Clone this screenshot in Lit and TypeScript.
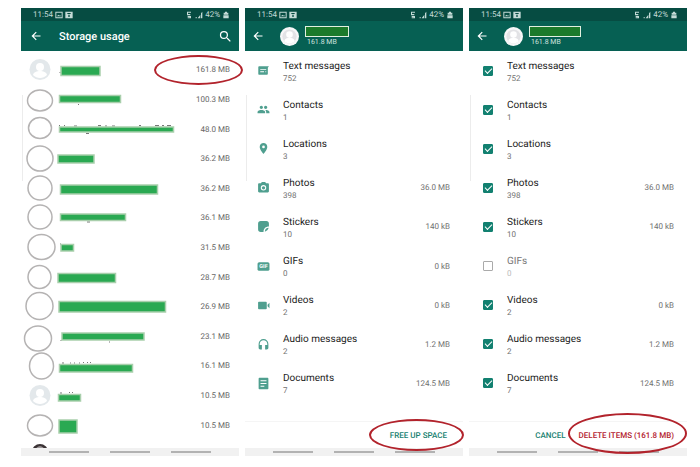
import { LitElement, html, css, svg, nothing } from "lit";
import { customElement, property } from "lit/decorators.js";

/* ---------- data ---------- */

interface Chat {
  size: string;
  // hand-drawn ring over the picture: cx, cy, rx, ry (row centre is y = 15)
  ring?: [number, number, number, number];
  // block over the name: x, y, width, height
  mask: [number, number, number, number];
  // bits of the name that stick out from under the block
  specks?: [number, number, number][];
}

const CHATS: Chat[] = [
  { size: "161.8 MB", mask: [40, 11.5, 39, 9], specks: [[38.5, 17, 1]] },
  { size: "100.3 MB", ring: [19, 15.5, 12.5, 10.5], mask: [38.5, 10.5, 61, 7], specks: [[57, 19, 1]] },
  { size: "48.0 MB", ring: [19, 13, 11.5, 10.5], mask: [38.5, 12, 114, 5], specks: [[38, 10, 1], [43, 10, 1], [53, 10.5, 3], [77, 10, 3], [84, 10.5, 2], [91, 10.5, 3], [118, 10, 2], [134, 10, 4], [141, 10, 2], [146, 10, 4], [65, 18, 3]] },
  { size: "36.2 MB", ring: [19, 14.5, 13, 12.5], mask: [37, 11, 36, 8] },
  { size: "36.2 MB", ring: [19, 14, 12, 12], mask: [39.5, 11, 97, 9] },
  { size: "36.1 MB", ring: [19, 14, 12, 12], mask: [39.5, 11, 65, 6.5], specks: [[66, 18.5, 3]] },
  { size: "31.5 MB", ring: [20.5, 14, 13.5, 12.5], mask: [40, 11.5, 12.5, 6.5], specks: [[39, 10.5, 1]] },
  { size: "28.7 MB", ring: [18.5, 14, 11.5, 11.5], mask: [37, 10.5, 57.5, 9] },
  { size: "26.9 MB", ring: [18.5, 14, 13.5, 13.5], mask: [38, 9.5, 106.5, 10.5] },
  { size: "23.1 MB", ring: [17, 16.5, 13.5, 12.5], mask: [41, 11, 82, 7], specks: [[39.5, 18, 1], [88, 19.5, 1]] },
  { size: "16.1 MB", ring: [20.5, 15, 12, 13], mask: [38.5, 13.5, 73, 7.5], specks: [[41, 11.5, 2], [49, 11.5, 1], [53, 11.5, 1], [58, 11.5, 1], [62, 11, 1], [66, 11, 1], [69, 11, 1]] },
  { size: "10.5 MB", mask: [37.5, 13.5, 22, 6.5], specks: [[39, 11.5, 2], [48, 11, 1], [51, 11, 1]] },
  { size: "10.5 MB", ring: [19, 14.5, 12.5, 10.5], mask: [38, 9, 18, 13] },
];

interface Kind {
  name: string;
  count: number;
  size?: string;
  icon: string;
}

const KINDS: Kind[] = [
  { name: "Text messages", count: 752, icon: "message" },
  { name: "Contacts", count: 1, icon: "people" },
  { name: "Locations", count: 3, icon: "place" },
  { name: "Photos", count: 398, size: "36.0 MB", icon: "camera" },
  { name: "Stickers", count: 10, size: "140 kB", icon: "sticker" },
  { name: "GIFs", count: 0, size: "0 kB", icon: "gif" },
  { name: "Videos", count: 2, size: "0 kB", icon: "video" },
  { name: "Audio messages", count: 2, size: "1.2 MB", icon: "audio" },
  { name: "Documents", count: 7, size: "124.5 MB", icon: "document" },
];

/* ---------- icons ---------- */

const ICONS: Record<string, unknown> = {
  message: svg`<path fill-rule="evenodd" d="M22 4H4c-1 0-1.600.6-1.600 1.600V18c0 1 .7 2 1.800 2H18c1 0 2-.9 2-2V7zM6 9h11v1.800H6zm0 4.200h7V15H6zm9.500 0H17V15h-1.500z"/>`,
  people: svg`<path d="M16 11c1.660 0 2.990-1.340 2.990-3S17.660 5 16 5s-3 1.340-3 3 1.340 3 3 3zm-8 0c1.660 0 2.990-1.340 2.990-3S9.660 5 8 5 5 6.340 5 8s1.340 3 3 3zm0 2c-2.330 0-7 1.170-7 3.500V19h14v-2.500c0-2.330-4.670-3.500-7-3.500zm8 0c-.29 0-.62.020-.97.050 1.160.84 1.970 1.970 1.970 3.450V19h6v-2.500c0-2.330-4.670-3.500-7-3.500z"/>`,
  place: svg`<path d="M12 2C8.130 2 5 5.130 5 9c0 5.250 7 13 7 13s7-7.750 7-13c0-3.870-3.130-7-7-7zm0 9.500a2.500 2.500 0 1 1 0-5 2.500 2.500 0 0 1 0 5z"/>`,
  camera: svg`<circle cx="12" cy="12.500" r="3"/><path fill-rule="evenodd" d="M9 2 7.170 4H4c-1.100 0-2 .9-2 2v13c0 1.100.9 2 2 2h16c1.100 0 2-.9 2-2V6c0-1.100-.9-2-2-2h-3.170L15 2zm3 15.500a5 5 0 1 1 0-10 5 5 0 0 1 0 10z"/>`,
  sticker: svg`<path d="M7 2h10a5 5 0 0 1 5 5v5c-6 0-10 4-10 10H7a5 5 0 0 1-5-5V7a5 5 0 0 1 5-5z"/><path d="M14.500 21.500c0-4 3-7 7-7-.5 3-4 6.500-7 7z"/>`,
  gif: svg`<rect x="1" y="4" width="22" height="16" rx="3"/><text x="12" y="15.600" text-anchor="middle" font-size="10" font-weight="700" fill="#fff">GIF</text>`,
  video: svg`<path d="M3.500 5h13c.8 0 1.500.6 1.500 1.500v11c0 .8-.7 1.500-1.500 1.500h-13C2.600 19 2 18.300 2 17.500v-11C2 5.600 2.600 5 3.500 5zM19.500 10.500 23 7v10l-3.500-3.500z"/>`,
  audio: svg`<path d="M12 2a9 9 0 0 0-9 9v7c0 1.660 1.340 3 3 3h3v-8H5v-2c0-3.870 3.130-7 7-7s7 3.130 7 7v2h-4v8h3c1.660 0 3-1.340 3-3v-7a9 9 0 0 0-9-9z"/>`,
  document: svg`<path fill-rule="evenodd" d="M4.500 1.500h15c1 0 1.500.6 1.500 1.500v18c0 1-.5 1.500-1.500 1.500h-15C3.500 22.500 3 22 3 21V3c0-.9.5-1.500 1.500-1.500zM6.500 6v2h11V6zm0 5v2h11v-2zm0 5v2h7v-2z"/>`,
  back: svg`<path d="M21 10.800H7.600l5.700-5.700L11.700 3.500 3 12l8.700 8.500 1.600-1.600-5.700-5.700H21z"/>`,
  search: svg`<path d="M15.500 14h-.79l-.28-.27A6.470 6.470 0 0 0 16 9.500 6.500 6.500 0 1 0 9.500 16c1.610 0 3.090-.59 4.230-1.570l.27.28v.79l5 4.990L20.490 19zm-6 0a4.500 4.500 0 1 1 0-9 4.500 4.500 0 0 1 0 9z"/>`,
  picture: svg`<path fill-rule="evenodd" d="M1 2h22v20H1zM4 5v14h16V5zM6 16l4-5 3 3 2-2 3 4z"/>`,
  note: svg`<path fill-rule="evenodd" d="M1 2h22v20H1zM7 6v3h10V6zm3 5v7h4v-7z"/>`,
  network: svg`<path d="M6 2h12v3H9v4h7v4H6zM8 15h10v7H8v-3h6v-1H8z"/>`,
  signal: svg`<path d="M2 22h3v-4H2zM8 22 16 11v11zM18 22h4V2l-4 5z"/>`,
  battery: svg`<path d="M9 2h6v3h4v6H5V5h4zM4 13h16v9H4z"/>`,
};

const icon = (name: string, cls = "") =>
  html`<svg class="icon ${cls}" viewBox="0 0 24 24" aria-hidden="true">${ICONS[name]}</svg>`;

const base = css`
  * {
    box-sizing: border-box;
  }
  .icon {
    display: block;
    flex: none;
    width: 13px;
    height: 13px;
    fill: currentColor;
  }
  button {
    margin: 0;
    padding: 0;
    border: 0;
    background: none;
    color: inherit;
    font: inherit;
    text-rendering: inherit;
    white-space: nowrap;
    cursor: pointer;
  }
`;

/* ---------- phone frame ---------- */

@customElement("phone-frame")
export class PhoneFrame extends LitElement {
  static styles = [
    base,
    css`
      :host {
        position: relative;
        display: flex;
        flex-direction: column;
        min-width: 0;
      }
      .status {
        display: flex;
        align-items: center;
        gap: 2px;
        height: 13px;
        padding: 1px 9px 0 12px;
        background: #064c42;
        color: #c3dad6;
        font-size: 8px;
        line-height: 12px;
      }
      .status .icon {
        width: 8px;
        height: 8px;
      }
      .status .gap {
        flex: 1;
      }
      .bar {
        display: flex;
        align-items: center;
        height: 30px;
        background: #066053;
        color: #fff;
      }
      .content {
        flex: 1;
        display: flex;
        flex-direction: column;
      }
      .nav {
        display: flex;
        justify-content: center;
        align-items: center;
        gap: 21px;
        height: 8px;
        background: #f1f1f1;
      }
      .nav i {
        width: 40px;
        height: 2px;
        background: #b2b2b2;
      }
      .handle {
        position: absolute;
        left: 1px;
        top: 87px;
        width: 1px;
        height: 86px;
        background: #ececec;
      }
    `,
  ];

  render() {
    return html`
      <div class="status">
        <span>11:54</span>${icon("picture")}${icon("note")}
        <span class="gap"></span>
        ${icon("network")}${icon("signal")}<span>42%</span>${icon("battery")}
      </div>
      <header class="bar"><slot name="bar"></slot></header>
      <div class="content"><slot></slot></div>
      <div class="nav"><i></i><i></i><i></i></div>
      <span class="handle"></span>
    `;
  }
}

/* ---------- app ---------- */

@customElement("app-root")
export class AppRoot extends LitElement {
  @property({ attribute: false }) chats = CHATS;
  @property({ attribute: false }) kinds = KINDS;

  static styles = [
    base,
    css`
      :host {
        display: block;
        background: #fff;
        color: #303030;
        font-family: Roboto, "Liberation Sans", sans-serif;
        font-size: 8px;
        line-height: 11px;
        text-rendering: geometricPrecision;
      }
      main {
        display: grid;
        grid-template-columns: repeat(3, minmax(0, 1fr));
        gap: 6px;
        padding: 8px 13px 11px 21px;
      }

      /* app bars */
      .top {
        flex: 1;
        display: flex;
        align-items: center;
        height: 30px;
        padding: 0 6px 0 9px;
      }
      .top h1 {
        flex: 1;
        margin: 0 0 0 17px;
        padding-top: 2px;
        font-size: 11px;
        line-height: 14px;
        font-weight: 500;
      }
      .top.contact {
        padding-left: 7px;
      }
      .top .icon {
        width: 12px;
        height: 12px;
      }
      .top .big {
        width: 15px;
        height: 15px;
      }
      .face {
        flex: none;
        width: 19px;
        height: 19px;
        margin: 0 6px 0 16px;
      }
      .who {
        display: flex;
        flex-direction: column;
        font-size: 7px;
        line-height: 10px;
        color: #cfe2df;
      }
      .who span {
        padding-left: 2px;
      }
      .cover {
        width: 44px;
        height: 11px;
        border: 1px solid #e2f0e0;
        background: #1b7a2b;
      }
      .cover.wide {
        width: 52px;
      }

      /* chats */
      .chats {
        display: grid;
        grid-template-columns: minmax(0, 1fr);
        grid-auto-rows: 1fr;
        min-height: 385px;
        margin: 4px 0 0;
        padding: 0;
        list-style: none;
      }
      .chat {
        position: relative;
        display: flex;
        align-items: center;
        padding-right: 9px;
        color: #666;
      }
      .sketch {
        flex: 1;
        width: 0;
        min-width: 0;
        height: 29px;
        overflow: visible;
      }
      .peek {
        height: 8px;
        overflow: hidden;
        padding: 4px 0 0 11px;
      }
      .peek svg {
        display: block;
        width: 16px;
        height: 16px;
      }

      /* kinds of item */
      .kinds {
        display: grid;
        grid-auto-rows: 1fr;
        min-height: 352px;
        margin: 0;
        padding: 0;
        list-style: none;
      }
      .kind {
        display: flex;
        align-items: center;
        gap: 13px;
        padding: 0 13px 0 12px;
        color: #707070;
      }
      .kind > .icon {
        color: #4f9f8f;
      }
      .kind label,
      .kind .label {
        flex: 1;
        padding-top: 3px;
      }
      .name {
        display: block;
        font-size: 10px;
        line-height: 12px;
        color: #222;
      }
      .count {
        display: block;
      }
      .off .name {
        color: #777;
      }
      .off .count {
        color: #bbb;
      }
      .tick {
        width: 13px;
        display: flex;
        justify-content: center;
      }
      input {
        appearance: none;
        position: relative;
        width: 10px;
        height: 10px;
        margin: 0;
        border: 1px solid #aaa;
        border-radius: 1px;
        background: #fff;
      }
      input:checked {
        border-color: #128070;
        background: #128070;
      }
      input:checked::after {
        content: "";
        position: absolute;
        left: 1px;
        top: 1px;
        width: 6px;
        height: 3px;
        border: solid #fff;
        border-width: 0 0 1px 1px;
        transform: rotate(-45deg);
      }

      /* actions */
      .actions {
        display: flex;
        justify-content: flex-end;
        align-items: center;
        gap: 13px;
        height: 27px;
        margin-top: auto;
        padding: 0 13px;
        border-top: 1px solid #f5f5f5;
        font-weight: 500;
        color: #16806f;
      }
      .actions.single {
        padding-right: 16px;
      }
      .danger {
        color: #b3202e;
      }
      .spot {
        position: relative;
      }

      /* red pen circles */
      .pen {
        position: absolute;
        z-index: 1;
        border: 2px solid #b2232c;
        border-radius: 50%;
        pointer-events: none;
      }
      .pen.size {
        right: -4px;
        top: 0;
        width: 89px;
        height: 30px;
      }
      .pen.free {
        inset: -11px -17px -10px -21px;
      }
      .pen.delete {
        inset: -17px -13px -13px -11px;
      }
    `,
  ];

  private face(cls = "face") {
    return html`<svg class=${cls} viewBox="0 0 20 20" aria-hidden="true">
      <circle cx="10" cy="10" r="10" fill="#f7f7f8" />
      <circle cx="10" cy="10" r="7.500" fill="#e3e3e6" />
      <circle cx="10" cy="8" r="3.500" fill="#fff" />
      <path d="M4.500 15c.5-3 3-3.500 5.500-3.500s5 .5 5.500 3.500c-3 3-8 3-11 0z" fill="#fff" />
    </svg>`;
  }

  private chatRow(chat: Chat, first: boolean) {
    const [x, y, w, h] = chat.mask;
    return html`<li class="chat">
      <svg class="sketch" aria-hidden="true">
        ${chat.ring
          ? svg`<ellipse cx=${chat.ring[0]} cy=${chat.ring[1]} rx=${chat.ring[2]} ry=${chat.ring[3]} fill="#fff" stroke="#b5b3b3" stroke-width="1.500"/>`
          : svg`<circle cx="19" cy="14.500" r="10.500" fill="#e3e8eb"/>
              <circle cx="19" cy="12" r="4" fill="#fff"/>
              <path d="M12 20c.5-3 4-4 7-4s6.500 1 7 4c-4 4-10 4-14 0z" fill="#fff"/>`}
        ${(chat.specks ?? []).map(
          ([sx, sy, sw]) => svg`<rect x=${sx} y=${sy} width=${sw} height="1" fill="#777"/>`
        )}
        <rect x=${x} y=${y} width=${w} height=${h} fill="#2aa952" stroke="#a9cfac" stroke-width="1.500" />
      </svg>
      <span>${chat.size}</span>
      ${first ? html`<span class="pen size"></span>` : nothing}
    </li>`;
  }

  private contactBar(wide: boolean) {
    return html`<div class="top contact" slot="bar">
      <button aria-label="Back">${icon("back")}</button>
      ${this.face()}
      <div class="who">
        <i class="cover ${wide ? "wide" : ""}"></i>
        <span>161.8 MB</span>
      </div>
    </div>`;
  }

  private text(kind: Kind) {
    return html`<span class="name">${kind.name}</span><span class="count">${kind.count}</span>`;
  }

  render() {
    return html`<main>
      <phone-frame>
        <div class="top" slot="bar">
          <button aria-label="Back">${icon("back")}</button>
          <h1>Storage usage</h1>
          <button aria-label="Search">${icon("search", "big")}</button>
        </div>
        <ul class="chats">
          ${this.chats.map((c, i) => this.chatRow(c, i === 0))}
        </ul>
        <div class="peek">
          <svg viewBox="0 0 16 16" aria-hidden="true">
            <circle cx="8" cy="8" r="8" fill="#3a3234" />
            <path d="M4 4.500c2-3 6-3 8 0z" fill="#a09a9c" />
          </svg>
        </div>
      </phone-frame>

      <phone-frame>
        ${this.contactBar(false)}
        <ul class="kinds">
          ${this.kinds.map(
            (k) => html`<li class="kind">
              ${icon(k.icon)}
              <div class="label">${this.text(k)}</div>
              ${k.size ? html`<span>${k.size}</span>` : nothing}
            </li>`
          )}
        </ul>
        <div class="actions single">
          <span class="spot"><button>FREE UP SPACE</button><span class="pen free"></span></span>
        </div>
      </phone-frame>

      <phone-frame>
        ${this.contactBar(true)}
        <ul class="kinds">
          ${this.kinds.map((k, i) => {
            const on = k.count > 0;
            return html`<li class="kind ${on ? "" : "off"}">
              <span class="tick"><input type="checkbox" id="kind-${i}" .checked=${on} /></span>
              <label for="kind-${i}">${this.text(k)}</label>
              ${on && k.size ? html`<span>${k.size}</span>` : nothing}
            </li>`;
          })}
        </ul>
        <div class="actions">
          <button>CANCEL</button>
          <span class="spot danger"><button>DELETE ITEMS (161.8 MB)</button><span class="pen delete"></span></span>
        </div>
      </phone-frame>
    </main>`;
  }
}
